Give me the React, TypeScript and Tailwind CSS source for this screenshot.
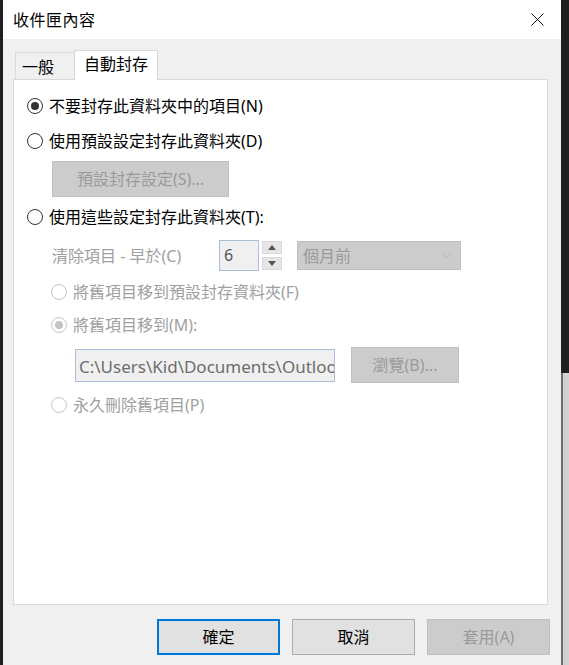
import React from "react"

const font = { fontFamily: '"Noto Sans", "Noto Sans CJK TC", sans-serif' }

function Radio({ checked = false, disabled = false }: { checked?: boolean; disabled?: boolean }) {
   return (
      <span
         className={
            "flex h-[16px] w-[16px] shrink-0 items-center justify-center rounded-full border bg-white " +
            (disabled ? "border-[#c4c4c4]" : "border-[#333333]")
         }
      >
         {checked && (
            <span className={"h-[8px] w-[8px] rounded-full " + (disabled ? "bg-[#c4c4c4]" : "bg-[#333333]")} />
         )}
      </span>
   )
}

function RadioRow({ label, checked, disabled, indent }: { label: string; checked?: boolean; disabled?: boolean; indent?: boolean }) {
   return (
      <div className={"flex h-[24px] items-center gap-[6px] " + (indent ? "pl-[37px]" : "pl-[13px]")}>
         <Radio checked={checked} disabled={disabled} />
         <span className={disabled ? "text-[#a0a0a0]" : "text-black"}>{label}</span>
      </div>
   )
}

function DisabledButton({ label, className }: { label: string; className: string }) {
   return (
      <div className={"flex items-center justify-center border border-[#bfbfbf] bg-[#cccccc] text-[#9a9a9a] " + className}>
         {label}
      </div>
   )
}

function Spinner() {
   return (
      <div className="ml-[3px] flex h-[29px] w-[20px] flex-col justify-between">
         <div className="flex h-[13px] items-center justify-center border border-[#dadada] bg-[#e6e6e6]">
            <svg width="8" height="5" viewBox="0 0 8 5">
               <polygon points="0,5 8,5 4,0" fill="#555" />
            </svg>
         </div>
         <div className="flex h-[13px] items-center justify-center border border-[#dadada] bg-[#e6e6e6]">
            <svg width="8" height="5" viewBox="0 0 8 5">
               <polygon points="0,0 8,0 4,5" fill="#555" />
            </svg>
         </div>
      </div>
   )
}

export default function App() {
   return (
      <div className="flex h-[665px] w-[569px] overflow-hidden text-[16px] leading-none" style={font}>
         <div className="w-[3px] bg-[#1e1e1e]" />

         <div className="flex w-[558px] flex-col bg-[#f0f0f0]">
            {/* title bar */}
            <div className="flex h-[39px] items-center justify-between bg-white pl-[10px] pr-[17px]">
               <span className="tracking-[0.5px] text-black">收件匣內容</span>
               <svg width="13" height="13" viewBox="0 0 13 13">
                  <path d="M0.5 0.5 L12.5 12.5 M12.5 0.5 L0.5 12.5" stroke="#111" strokeWidth="1" />
               </svg>
            </div>

            {/* tabs */}
            <div className="flex items-end pl-[12px] pt-[11px]">
               <div className="flex h-[27px] w-[59px] items-center border border-b-0 border-r-0 border-[#d9d9d9] bg-[#f0f0f0] pl-[6px] pt-[2px] text-black">
                  一般
               </div>
               <div className="relative z-10 -mb-[1px] flex h-[30px] w-[84px] items-center border border-b-0 border-[#d9d9d9] bg-white pb-[4px] pl-[9px] text-black">
                  自動封存
               </div>
            </div>

            {/* panel */}
            <div className="ml-[10px] mr-[13px] h-[526px] border border-[#d9d9d9] bg-white">
               <div className="flex flex-col">
                  <div className="mt-[14px]">
                     <RadioRow label="不要封存此資料夾中的項目(N)" checked />
                  </div>
                  <div className="mt-[11px]">
                     <RadioRow label="使用預設設定封存此資料夾(D)" />
                  </div>
                  <div className="mt-[8px] pl-[38px]">
                     <DisabledButton label="預設封存設定(S)..." className="h-[36px] w-[177px]" />
                  </div>
                  <div className="mt-[8px]">
                     <RadioRow label="使用這些設定封存此資料夾(T):" />
                  </div>

                  <div className="mt-[11px] flex h-[31px] items-center pl-[38px]">
                     <span className="w-[167px] text-[#a0a0a0]">清除項目 - 早於(C)</span>
                     <div className="flex h-[31px] w-[40px] items-start border border-[#a9bfd9] bg-[#f0f0f0] pl-[4px] pt-[6px] text-[#555555]">
                        6
                     </div>
                     <Spinner />
                     <div className="ml-[15px] flex h-[29px] w-[164px] items-center justify-between border border-[#bfbfbf] bg-[#cccccc] pl-[5px] pr-[8px] text-[#9a9a9a]">
                        <span>個月前</span>
                        <svg width="10" height="6" viewBox="0 0 10 6">
                           <polyline points="0.5,0.5 5,5 9.5,0.5" fill="none" stroke="#b4b4b4" strokeWidth="1" />
                        </svg>
                     </div>
                  </div>

                  <div className="mt-[9px]">
                     <RadioRow label="將舊項目移到預設封存資料夾(F)" disabled indent />
                  </div>
                  <div className="mt-[9px]">
                     <RadioRow label="將舊項目移到(M):" checked disabled indent />
                  </div>

                  <div className="mt-[10px] flex h-[36px] items-center pl-[61px]">
                     <input
                        readOnly
                        value={"C:\\Users\\Kid\\Documents\\Outlook 檔案\\archive.pst"}
                        className="h-[33px] w-[260px] border border-[#a9bfd9] bg-[#f0f0f0] pl-[3px] text-[17px] text-[#6d6d6d] outline-none"
                        style={font}
                     />
                     <DisabledButton label="瀏覽(B)..." className="ml-[16px] h-[36px] w-[108px]" />
                  </div>

                  <div className="mt-[10px]">
                     <RadioRow label="永久刪除舊項目(P)" disabled indent />
                  </div>
               </div>
            </div>

            {/* footer buttons */}
            <div className="mt-[14px] flex justify-end gap-[12px] pr-[11px]">
               <div className="flex h-[36px] w-[123px] items-center justify-center border-2 border-[#0078d7] bg-[#e1e1e1] text-black">
                  確定
               </div>
               <div className="flex h-[36px] w-[123px] items-center justify-center border border-[#adadad] bg-[#e1e1e1] text-black">
                  取消
               </div>
               <DisabledButton label="套用(A)" className="h-[36px] w-[123px]" />
            </div>
         </div>

         <div className="flex w-[8px] flex-col">
            <div className="h-[373px] bg-[#1f1f1f]" />
            <div className="flex-1 border-l-2 border-[#6e6e6e] bg-[#d2d2d2]" />
         </div>
      </div>
   )
}
